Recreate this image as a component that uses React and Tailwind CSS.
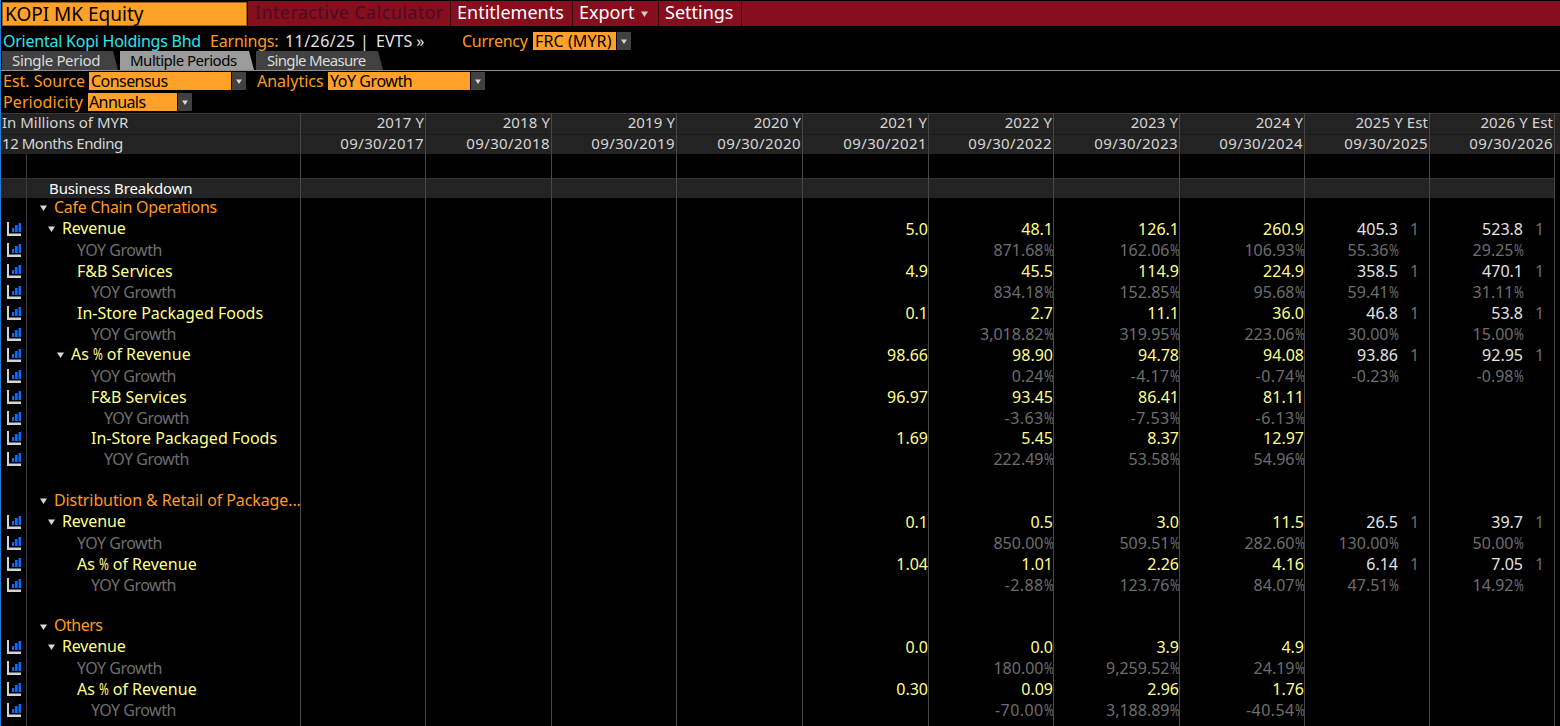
const COLUMNS = [
  ["2017 Y", "09/30/2017"],
  ["2018 Y", "09/30/2018"],
  ["2019 Y", "09/30/2019"],
  ["2020 Y", "09/30/2020"],
  ["2021 Y", "09/30/2021"],
  ["2022 Y", "09/30/2022"],
  ["2023 Y", "09/30/2023"],
  ["2024 Y", "09/30/2024"],
  ["2025 Y Est", "09/30/2025"],
  ["2026 Y Est", "09/30/2026"],
];

// values start at 2021, the earlier years are empty
const ROWS = [
  { kind: "group", label: "Cafe Chain Operations" },
  { kind: "item", indent: 1, arrow: true, label: "Revenue", values: ["5.0", "48.1", "126.1", "260.9", "405.3", "523.8"] },
  { kind: "growth", indent: 1, values: ["", "871.68%", "162.06%", "106.93%", "55.36%", "29.25%"] },
  { kind: "item", indent: 3, label: "F&B Services", values: ["4.9", "45.5", "114.9", "224.9", "358.5", "470.1"] },
  { kind: "growth", indent: 2, values: ["", "834.18%", "152.85%", "95.68%", "59.41%", "31.11%"] },
  { kind: "item", indent: 3, label: "In-Store Packaged Foods", values: ["0.1", "2.7", "11.1", "36.0", "46.8", "53.8"] },
  { kind: "growth", indent: 2, values: ["", "3,018.82%", "319.95%", "223.06%", "30.00%", "15.00%"] },
  { kind: "item", indent: 2, arrow: true, label: "As % of Revenue", values: ["98.66", "98.90", "94.78", "94.08", "93.86", "92.95"] },
  { kind: "growth", indent: 2, values: ["", "0.24%", "-4.17%", "-0.74%", "-0.23%", "-0.98%"] },
  { kind: "item", indent: 4, label: "F&B Services", values: ["96.97", "93.45", "86.41", "81.11", "", ""] },
  { kind: "growth", indent: 3, values: ["", "-3.63%", "-7.53%", "-6.13%", "", ""] },
  { kind: "item", indent: 4, label: "In-Store Packaged Foods", values: ["1.69", "5.45", "8.37", "12.97", "", ""] },
  { kind: "growth", indent: 3, values: ["", "222.49%", "53.58%", "54.96%", "", ""] },
  { kind: "blank" },
  { kind: "group", label: "Distribution & Retail of Package..." },
  { kind: "item", indent: 1, arrow: true, label: "Revenue", values: ["0.1", "0.5", "3.0", "11.5", "26.5", "39.7"] },
  { kind: "growth", indent: 1, values: ["", "850.00%", "509.51%", "282.60%", "130.00%", "50.00%"] },
  { kind: "item", indent: 3, label: "As % of Revenue", values: ["1.04", "1.01", "2.26", "4.16", "6.14", "7.05"] },
  { kind: "growth", indent: 2, values: ["", "-2.88%", "123.76%", "84.07%", "47.51%", "14.92%"] },
  { kind: "blank" },
  { kind: "group", label: "Others" },
  { kind: "item", indent: 1, arrow: true, label: "Revenue", values: ["0.0", "0.0", "3.9", "4.9", "", ""] },
  { kind: "growth", indent: 1, values: ["", "180.00%", "9,259.52%", "24.19%", "", ""] },
  { kind: "item", indent: 3, label: "As % of Revenue", values: ["0.30", "0.09", "2.96", "1.76", "", ""] },
  { kind: "growth", indent: 2, values: ["", "-70.00%", "3,188.89%", "-40.54%", "", ""] },
];

const GRID =
  "grid grid-cols-[26px_273px_125px_126px_125px_126px_126px_125px_126px_125px_125px_125px_6px]";

const ITEM_PAD = {
  1: "pl-[21px]",
  2: "pl-[30px]",
  3: "pl-[50px]",
  4: "pl-[64px]",
};

const GROWTH_PAD = {
  1: "pl-[50px]",
  2: "pl-[64px]",
  3: "pl-[77px]",
};

const LABEL_TRACKING = {
  "Cafe Chain Operations": "tracking-[-0.27px]",
  "Distribution & Retail of Package...": "tracking-[-0.1px]",
  Others: "tracking-[-0.5px]",
};

function Triangle({ className = "h-[6px] w-[7px]" }) {
  return (
    <svg viewBox="0 0 7 6" className={`shrink-0 ${className}`}>
      <path d="M0 0.5h7L3.5 6z" fill="currentColor" />
    </svg>
  );
}

function ChartIcon() {
  return (
    <svg viewBox="0 0 14 14" className="ml-[6px] h-[14px] w-[14px]">
      <path d="M0 0h2v11.5h12V14H0z" fill="#d4d4d4" />
      <path d="M5 6h2.2v4H5zM8 3h2.7v7H8zM11.6 1H14v9h-2.4z" fill="#0a6cff" />
    </svg>
  );
}

// percent signs are condensed so that they take the width of a digit
function Condensed({ text }) {
  const [before, after] = text.split("%");
  if (after === undefined) return text;
  return (
    <>
      {before}
      <span className="inline-block w-[9.5px] origin-left scale-x-[0.74] tracking-normal">%</span>
      {after}
    </>
  );
}

function Dropdown({ value, width, textClass = "" }) {
  return (
    <div className="flex h-[18px]">
      <div className={`flex items-center bg-[#ffa028] pl-[2px] text-black ${width}`}>
        <span className={textClass}>{value}</span>
      </div>
      <div className="ml-px flex w-[14px] items-center justify-center bg-[#414141] text-[#d8d8d8]">
        <Triangle className="h-[5px] w-[6px]" />
      </div>
    </div>
  );
}

function Tab({ label, width, active, textClass = "" }) {
  return (
    <div
      className={`flex h-[19px] items-center pl-[10px] text-[15px] [clip-path:polygon(0_0,calc(100%-5px)_0,100%_100%,0_100%)] ${width} ${
        active ? "bg-[#9b9b9b] text-black" : "bg-[#414141] text-[#dcdcdc]"
      }`}
    >
      <span className={textClass}>{label}</span>
    </div>
  );
}

function MenuItem({ children, width, muted }) {
  return (
    <div
      className={`flex h-[25px] items-center border-r border-[#30060c] pb-[3px] text-[18px] ${width} ${
        muted ? "pl-[7px] tracking-[0.38px] text-[#4c0c26]" : "pl-[6px] text-white"
      }`}
    >
      {children}
    </div>
  );
}

function Row({ row }) {
  const values = row.values || [];
  const growth = row.kind === "growth";
  return (
    <div className={`${GRID} h-[20.91px]`}>
      <div className="flex items-center">
        {(row.kind === "item" || growth) && <ChartIcon />}
      </div>
      <div className="flex min-w-0 items-center">
        {row.kind === "group" && (
          <div className="flex items-center pb-[3px] pl-[13px] text-[#ff9a1f]">
            <Triangle className="mt-[3px] h-[6px] w-[7px] text-[#d8d8d8]" />
            <span className={`pl-[7px] ${LABEL_TRACKING[row.label]}`}>{row.label}</span>
          </div>
        )}
        {row.kind === "item" && (
          <div
            className={`flex items-center text-[#ffff8c] ${ITEM_PAD[row.indent]} ${
              row.arrow ? "pb-[2px]" : ""
            }`}
          >
            {row.arrow && (
              <Triangle className="mt-[2px] mr-[7px] h-[6px] w-[7px] text-[#d8d8d8]" />
            )}
            <span className={row.label === "Revenue" ? "tracking-[-0.15px]" : ""}>
              <Condensed text={row.label} />
            </span>
          </div>
        )}
        {growth && (
          <div className={`tracking-[-0.5px] text-[#6e6e6e] ${GROWTH_PAD[row.indent]}`}>
            YOY Growth
          </div>
        )}
      </div>
      <div className="col-span-4" />
      {values.map((value, i) => {
        const est = i > 3;
        const color = growth ? "text-[#6e6e6e]" : est ? "text-[#e4e4e4]" : "text-[#ffff8c]";
        return (
          <div key={i} className={`flex items-center justify-end ${color}`}>
            <span className={!est && value.startsWith("-") ? "tracking-[0.4px]" : ""}>
              <Condensed text={value} />
            </span>
            {est && (
              <span className="w-[31px] pl-[12px] text-[#6e6e6e]">
                {!growth && value ? "1" : ""}
              </span>
            )}
          </div>
        );
      })}
    </div>
  );
}

export default function App() {
  return (
    <div className="relative flex h-[726px] w-[1560px] flex-col overflow-hidden border-l border-[#1c7ed6] bg-black font-['Noto_Sans',sans-serif] text-[16px] leading-none whitespace-nowrap">
      {/* Menu bar */}
      <div className="flex h-[27px] pt-px pl-px">
        <div className="mt-px flex h-[24px] w-[245px] items-center border border-[#9c6018] bg-[#ffa028] pl-[2px] text-[19px] text-black">
          <span>KOPI MK Equity</span>
        </div>
        <div className="ml-px flex h-[25px] flex-1 bg-[#870e1c]">
          <MenuItem width="w-[203px]" muted>Interactive Calculator</MenuItem>
          <MenuItem width="w-[122px]">Entitlements</MenuItem>
          <MenuItem width="w-[86px]">
            Export <Triangle className="mt-[3px] ml-[7px] h-[6px] w-[7px] text-[#d8c8c8]" />
          </MenuItem>
          <MenuItem width="w-[83px]">Settings</MenuItem>
        </div>
      </div>

      {/* Security line */}
      <div className="flex h-[24px] items-center pt-[4px] pl-[2px]">
        <span className="w-[207px] tracking-[-0.24px] text-[#2fe4f4]">Oriental Kopi Holdings Bhd</span>
        <span className="w-[75px] tracking-[-0.2px] text-[#ff9a1f]">Earnings:</span>
        <span className="w-[90px] tracking-[0.45px] text-[#e4e4e4]">11/26/25 |</span>
        <span className="w-[87px] pl-px text-[#e4e4e4]">EVTS »</span>
        <span className="w-[71px] tracking-[-0.25px] text-[#ff9a1f]">Currency</span>
        <Dropdown value="FRC (MYR)" width="w-[83px]" textClass="tracking-[0.1px]" />
      </div>

      {/* Tabs */}
      <div className="flex h-[20px] gap-[2px] border-b border-[#8c9090] pl-px">
        <Tab label="Single Period" width="w-[116px]" textClass="tracking-[-0.35px]" />
        <Tab label="Multiple Periods" width="w-[134px]" textClass="tracking-[-0.5px]" active />
        <Tab label="Single Measure" width="w-[127px]" textClass="pl-px tracking-[-0.68px]" />
      </div>

      {/* Filters */}
      <div className="flex h-[21px] items-center pb-px pl-[2px]">
        <span className="w-[86px] text-[#ff9a1f]">Est. Source</span>
        <Dropdown value="Consensus" width="w-[142px]" textClass="tracking-[-0.55px]" />
        <span className="ml-[11px] w-[71px] text-[#ff9a1f]">Analytics</span>
        <Dropdown value="YoY Growth" width="w-[142px]" textClass="tracking-[-0.45px]" />
      </div>
      <div className="flex h-[21px] items-center pb-px pl-[2px]">
        <span className="w-[85px] tracking-[0.1px] text-[#ff9a1f]">Periodicity</span>
        <Dropdown value="Annuals" width="w-[89px]" textClass="-ml-px tracking-[-0.6px]" />
      </div>

      {/* Financials table */}
      <div className="relative flex flex-1 flex-col">
        {[0, 1].map((line) => (
          <div
            key={line}
            className={`${GRID} bg-[#232323] pb-[3px] text-[15px] text-[#d6d6d6] ${
              line === 0 ? "h-[21px] border-t border-[#3a3a3a]" : "h-[20px] border-t border-[#1a1a1a]"
            }`}
          >
            <div
              className={`col-span-2 flex items-center pl-px ${line === 0 ? "" : "tracking-[-0.45px]"}`}
            >
              {line === 0 ? "In Millions of MYR" : "12 Months Ending"}
            </div>
            {COLUMNS.map((column) => (
              <div
                key={column[1]}
                className={`flex items-center justify-end pr-px ${
                  line === 0 ? "tracking-[0.1px]" : "tracking-[0.4px]"
                }`}
              >
                {column[line]}
              </div>
            ))}
          </div>
        ))}
        <div className="h-[24px]" />
        <div className="flex h-[20px] w-[1554px] items-center border-t border-[#343434] bg-[#232323] pl-[48px] text-[15px] tracking-[-0.12px] text-white">
          Business Breakdown
        </div>
        {ROWS.map((row, i) => (
          <Row key={i} row={row} />
        ))}

        {/* Column rules */}
        <div className={`pointer-events-none absolute inset-0 ${GRID}`}>
          <div className="mt-[41px] border-r border-[#3c3c3c]" />
          {Array.from({ length: 11 }, (_, i) => (
            <div key={i} className="-mr-px border-r border-[#484848]" />
          ))}
        </div>
      </div>
    </div>
  );
}
